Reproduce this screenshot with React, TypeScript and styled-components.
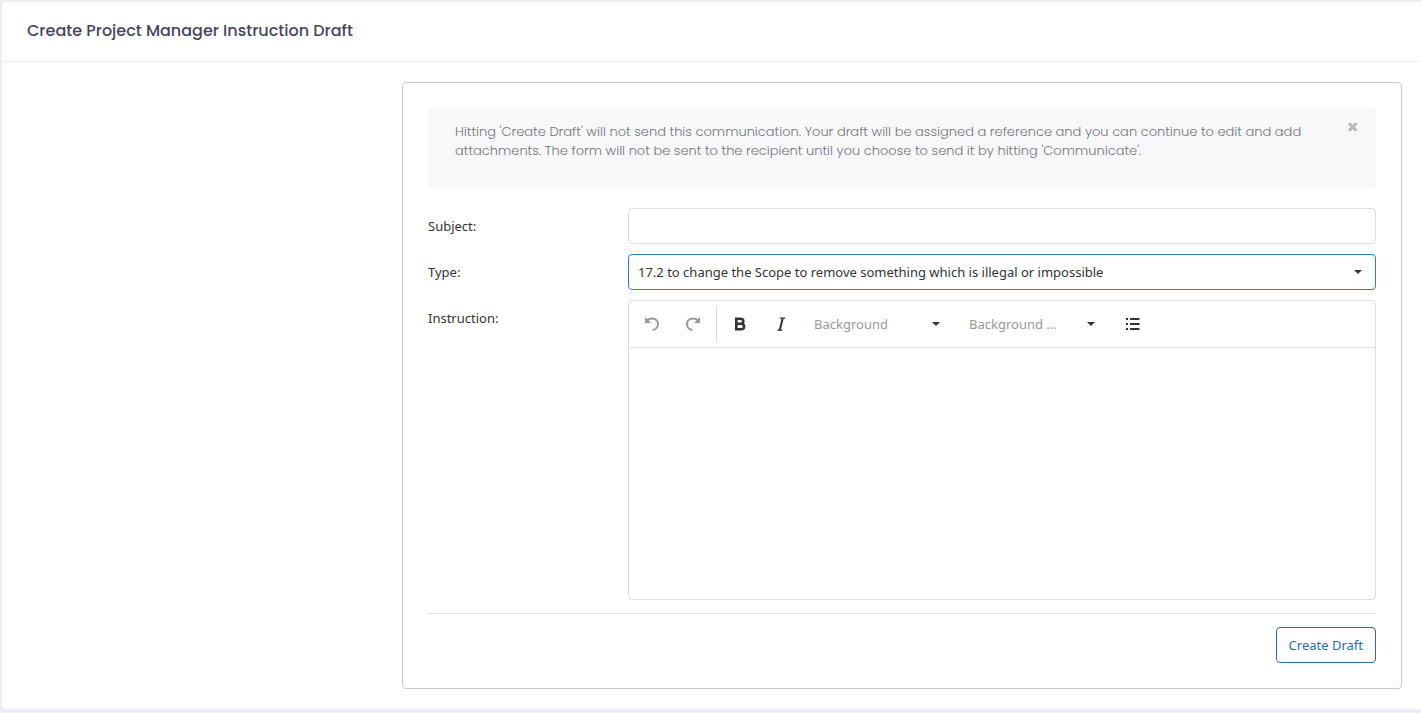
import React from "react";
import styled, { createGlobalStyle } from "styled-components";

const ui = `"Segoe UI", "Noto Sans", sans-serif`;
const heading = `Poppins, Inter, sans-serif`;

const GlobalStyle = createGlobalStyle`
  *, *::before, *::after { box-sizing: border-box; }
  body {
    margin: 0;
    background: #eeeef5;
    color: #333;
    font: 400 13px/20px ${ui};
  }
  button, input, select, textarea { font: inherit; color: inherit; margin: 0; }
`;

const Card = styled.main`
  margin: 2px 0 4px 2px;
  background: #fff;
  border-radius: 4px 0 0 4px;
`;

const CardHeader = styled.header`
  display: flex;
  align-items: center;
  height: 60px;
  padding: 0 25px 2px;
  border-bottom: 1px solid #ebedf2;
`;

const Title = styled.h1`
  margin: 0;
  color: #48465b;
  font: 500 16px/24px ${heading};
`;

const CardBody = styled.div`
  display: flex;
  justify-content: flex-end;
  padding: 20px 19px 20px 20px;
`;

const Panel = styled.form`
  width: 100%;
  max-width: 1000px;
  padding: 25px;
  border: 1px solid #c9c9c9;
  border-radius: 4px;
`;

const Notice = styled.div`
  display: flex;
  align-items: flex-start;
  min-height: 80px;
  margin-bottom: 20px;
  padding: 14px 16px 14px 27px;
  border-radius: 4px;
  background: #f8f8fb;
`;

const NoticeText = styled.p`
  flex: 1;
  margin: 0;
  padding-right: 24px;
  color: #74747c;
  font: 300 13px/19px ${heading};
`;

const CloseButton = styled.button`
  display: flex;
  padding: 0;
  border: 0;
  background: none;
  color: #b8b8ba;
  cursor: pointer;
`;

const Fields = styled.div`
  display: grid;
  grid-template-columns: 200px 1fr;
  row-gap: 10px;
`;

const Label = styled.label`
  padding-top: 8px;
`;

const TextInput = styled.input`
  width: 100%;
  height: 36px;
  padding: 0 9px;
  border: 1px solid #ddd;
  border-radius: 4px;
  background: #fff;
  outline: none;
`;

const SelectWrap = styled.div<{ $width?: string }>`
  position: relative;
  width: ${(p) => p.$width ?? "100%"};
`;

const Select = styled.select<{ $active?: boolean; $bare?: boolean }>`
  display: block;
  width: 100%;
  height: 36px;
  padding: 0 34px 0 ${(p) => (p.$bare ? 10 : 9)}px;
  border: ${(p) => (p.$bare ? "0" : `1px solid ${p.$active ? "#337ab7" : "#ddd"}`)};
  border-radius: 4px;
  background: #fff;
  color: ${(p) => (p.$bare ? "#999" : "#333")};
  appearance: none;
  outline: none;
  text-overflow: ellipsis;
`;

const CaretIcon = styled.svg`
  position: absolute;
  top: 16px;
  right: 14px;
  pointer-events: none;
`;

const Editor = styled.div`
  display: flex;
  flex-direction: column;
  height: 300px;
  border: 1px solid #ddd;
  border-radius: 4px;
`;

const Toolbar = styled.div`
  display: flex;
  align-items: center;
  gap: 5px;
  padding: 5px;
  border-bottom: 1px solid #ddd;
`;

const ToolButton = styled.button`
  display: flex;
  align-items: center;
  justify-content: center;
  width: 36px;
  height: 36px;
  padding: 0;
  border: 0;
  background: none;
  color: #333;
  cursor: pointer;

  &:disabled { color: #999; cursor: default; }
`;

const Separator = styled.span`
  width: 1px;
  height: 36px;
  background: #ddd;
`;

const EditorArea = styled.textarea`
  flex: 1;
  padding: 10px;
  border: 0;
  background: none;
  outline: none;
  resize: none;
`;

const Actions = styled.footer`
  display: flex;
  justify-content: flex-end;
  margin-top: 13px;
  padding-top: 13px;
  border-top: 1px solid #e1e1e1;
`;

const SubmitButton = styled.button`
  height: 36px;
  padding: 0 12px;
  border: 1px solid #2d6da3;
  border-radius: 4px;
  background: #fff;
  color: #2d6da3;
  cursor: pointer;
`;

const Caret = () => (
  <CaretIcon width="8" height="4" viewBox="0 0 8 4" aria-hidden="true">
    <path d="M0 0h8L4 4z" fill="#333" />
  </CaretIcon>
);

const Undo = () => (
  <svg width="18" height="18" viewBox="0 0 18 18" fill="none" aria-hidden="true">
    <path d="M2 2v6h6z" fill="currentColor" />
    <path d="M4 5.5C7.5 2 15 3 15 9.3c0 3-2.3 5.4-5.6 5.6" stroke="currentColor" strokeWidth="2" />
  </svg>
);

const Redo = () => (
  <svg width="18" height="18" viewBox="0 0 18 18" fill="none" aria-hidden="true">
    <path d="M16 2v6h-6z" fill="currentColor" />
    <path d="M14 5.5C10.5 2 3 3 3 9.3c0 3 2.3 5.4 5.6 5.6" stroke="currentColor" strokeWidth="2" />
  </svg>
);

const Bold = () => (
  <svg width="18" height="18" viewBox="0 0 18 18" fill="none" aria-hidden="true">
    <path d="M5.300 3.800h4.200c1.900 0 2.800.9 2.800 2.400S11.400 8.700 9.500 8.700H5.300h4.700c2 0 3.100 1.100 3.100 2.800s-1.100 2.800-3.100 2.800H5.300z" stroke="currentColor" strokeWidth="2.600" />
  </svg>
);

const Italic = () => (
  <svg width="18" height="18" viewBox="0 0 18 18" fill="none" aria-hidden="true">
    <path d="M8 3.200h5.200M5.200 15.200h5.200" stroke="currentColor" strokeWidth="1.200" />
    <path d="M10.700 3.200 7.700 15.200" stroke="currentColor" strokeWidth="2" />
  </svg>
);

const BulletList = () => (
  <svg width="18" height="18" viewBox="0 0 18 18" fill="currentColor" aria-hidden="true">
    <path d="M3 3h2v2H3zM3 8h2v2H3zM3 13h2v2H3zM7 3h9.500v2H7zM7 8h9.500v2H7zM7 13h9.500v2H7z" />
  </svg>
);

const Cross = () => (
  <svg width="14" height="10" viewBox="0 0 14 10" aria-hidden="true">
    <path d="M3 1.200l7.500 7.500M10.500 1.200L3 8.700" stroke="currentColor" strokeWidth="3" />
  </svg>
);

export default function App() {
  return (
    <>
      <GlobalStyle />
      <Card>
        <CardHeader>
          <Title>Create Project Manager Instruction Draft</Title>
        </CardHeader>
        <CardBody>
          <Panel onSubmit={(e) => e.preventDefault()}>
            <Notice role="note">
              <NoticeText>
                Hitting 'Create Draft' will not send this communication. Your draft will be assigned a reference and you
                can continue to edit and add attachments. The form will not be sent to the recipient until you choose to
                send it by hitting 'Communicate'.
              </NoticeText>
              <CloseButton type="button" aria-label="Close">
                <Cross />
              </CloseButton>
            </Notice>

            <Fields>
              <Label htmlFor="subject">Subject:</Label>
              <TextInput id="subject" type="text" />

              <Label htmlFor="type">Type:</Label>
              <SelectWrap>
                <Select id="type" $active>
                  <option>17.2 to change the Scope to remove something which is illegal or impossible</option>
                </Select>
                <Caret />
              </SelectWrap>

              <Label htmlFor="instruction">Instruction:</Label>
              <Editor>
                <Toolbar role="toolbar" aria-label="Formatting">
                  <ToolButton type="button" aria-label="Undo" disabled><Undo /></ToolButton>
                  <ToolButton type="button" aria-label="Redo" disabled><Redo /></ToolButton>
                  <Separator />
                  <ToolButton type="button" aria-label="Bold"><Bold /></ToolButton>
                  <ToolButton type="button" aria-label="Italic"><Italic /></ToolButton>
                  <SelectWrap $width="150px">
                    <Select $bare aria-label="Background">
                      <option>Background</option>
                    </Select>
                    <Caret />
                  </SelectWrap>
                  <SelectWrap $width="150px">
                    <Select $bare aria-label="Background style">
                      <option>Background ...</option>
                    </Select>
                    <Caret />
                  </SelectWrap>
                  <ToolButton type="button" aria-label="Bullet list"><BulletList /></ToolButton>
                </Toolbar>
                <EditorArea id="instruction" />
              </Editor>
            </Fields>

            <Actions>
              <SubmitButton type="submit">Create Draft</SubmitButton>
            </Actions>
          </Panel>
        </CardBody>
      </Card>
    </>
  );
}
